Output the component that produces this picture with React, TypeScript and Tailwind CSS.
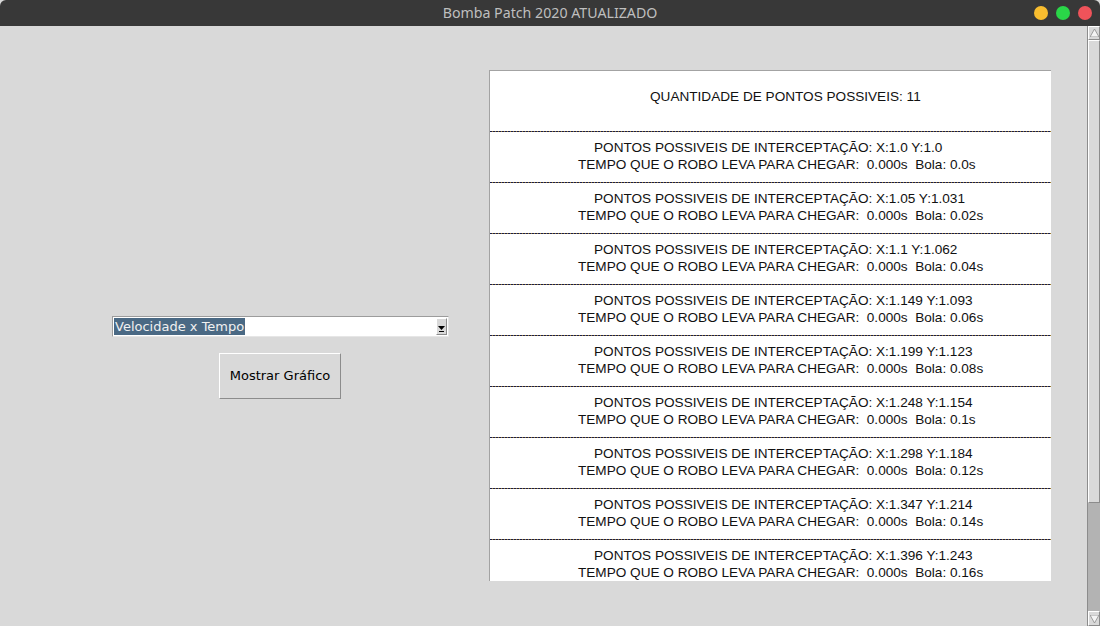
const pontos = [
  { x: '1.0', y: '1.0', bola: '0.0s' },
  { x: '1.05', y: '1.031', bola: '0.02s' },
  { x: '1.1', y: '1.062', bola: '0.04s' },
  { x: '1.149', y: '1.093', bola: '0.06s' },
  { x: '1.199', y: '1.123', bola: '0.08s' },
  { x: '1.248', y: '1.154', bola: '0.1s' },
  { x: '1.298', y: '1.184', bola: '0.12s' },
  { x: '1.347', y: '1.214', bola: '0.14s' },
  { x: '1.396', y: '1.243', bola: '0.16s' },
];

function Divider() {
  return (
    <div className="h-px w-full bg-[repeating-linear-gradient(90deg,#1b1f4a_0px,#1b1f4a_2px,#9a7a30_2px,#9a7a30_3px)]" />
  );
}

function Scrollbar() {
  return (
    <div className="w-[13px] h-full flex flex-col bg-[#b3b3b3] border-l border-[#8c8c8c]">
      <div className="h-[14px] bg-[#d9d9d9] border border-t-white border-l-white border-r-[#8c8c8c] border-b-[#8c8c8c] flex items-center justify-center">
        <svg width="9" height="8" viewBox="0 0 9 8">
          <polygon points="4.5,0 9,8 0,8" fill="#f4f4f4" stroke="#8c8c8c" strokeWidth="0.8" />
        </svg>
      </div>
      <div className="h-[463px] bg-[#d9d9d9] border border-t-white border-l-white border-r-[#8c8c8c] border-b-[#8c8c8c]" />
      <div className="flex-1" />
      <div className="h-[15px] bg-[#d9d9d9] border border-t-white border-l-white border-r-[#8c8c8c] border-b-[#8c8c8c] flex items-center justify-center">
        <svg width="9" height="8" viewBox="0 0 9 8">
          <polygon points="0,0 9,0 4.5,8" fill="#f4f4f4" stroke="#8c8c8c" strokeWidth="0.8" />
        </svg>
      </div>
    </div>
  );
}

export default function App() {
  return (
    <div className="w-[1100px] h-[626px] overflow-hidden bg-[#d9d9d9] flex flex-col">
      {/* barra de título */}
      <div className="h-[26px] shrink-0 bg-[#383838] rounded-t-[6px] relative flex items-center justify-center">
        <span className="text-[14.2px] text-[#bfbfbf] font-['Noto_Sans',sans-serif]">
          Bomba Patch 2020 ATUALIZADO
        </span>
        <div className="absolute right-[8px] top-[6px] flex gap-[8px]">
          <div className="w-[14px] h-[14px] rounded-full bg-[#f8bd2f]" />
          <div className="w-[14px] h-[14px] rounded-full bg-[#2ad648]" />
          <div className="w-[14px] h-[14px] rounded-full bg-[#ef535a]" />
        </div>
      </div>

      <div className="flex flex-1 min-h-0">
        {/* lado esquerdo */}
        <div className="w-[489px] shrink-0 pl-[112px] pt-[290px]">
          <div className="w-[337px] flex flex-col items-start">
            <div className="w-[337px] h-[21px] bg-white border border-t-[#9c9c9c] border-l-[#9c9c9c] border-r-[#e6e6e6] border-b-[#e6e6e6] flex items-center pl-[1px] pr-[1px]">
              <span className="bg-[#4a6984] text-[#f0f0f0] text-[13px] leading-[17px] h-[17px] font-['DejaVu_Sans',sans-serif] px-[1px]">
                Velocidade x Tempo
              </span>
              <div className="flex-1" />
              <div className="w-[11px] h-[17px] bg-[#d9d9d9] border border-t-white border-l-white border-r-[#8c8c8c] border-b-[#8c8c8c] flex flex-col items-center justify-end pb-[2px]">
                <svg width="7" height="6" viewBox="0 0 7 6">
                  <polygon points="0,0 7,0 3.5,4" fill="#000" />
                  <rect x="1" y="5" width="5" height="1" fill="#000" />
                </svg>
              </div>
            </div>
            <button className="mt-[16px] ml-[107px] w-[122px] h-[46px] bg-[#d9d9d9] border border-t-white border-l-white border-r-[#8c8c8c] border-b-[#8c8c8c] text-[13px] text-black font-['DejaVu_Sans',sans-serif]">
              Mostrar Gráfico
            </button>
          </div>
        </div>

        {/* lista de pontos */}
        <div className="mt-[44px] w-[562px] h-[511px] shrink-0 bg-white border-t border-l border-[#a3a3a3] overflow-hidden font-['Liberation_Sans',Arial,sans-serif] text-[13.6px] text-[#111]">
          <div className="h-[60px] flex items-center pl-[160px] pb-[8px]">
            QUANTIDADE DE PONTOS POSSIVEIS: 11
          </div>
          {pontos.map((p, i) => (
            <div key={i}>
              <Divider />
              <div className="h-[50px] pt-[7px] leading-[17px] whitespace-pre">
                <div className="pl-[104px]">PONTOS POSSIVEIS DE INTERCEPTAÇÃO: X:{p.x} Y:{p.y}</div>
                <div className="pl-[88px]">TEMPO QUE O ROBO LEVA PARA CHEGAR:  0.000s  Bola: {p.bola}</div>
              </div>
            </div>
          ))}
        </div>

        <div className="flex-1" />
        <Scrollbar />
      </div>
    </div>
  );
}
